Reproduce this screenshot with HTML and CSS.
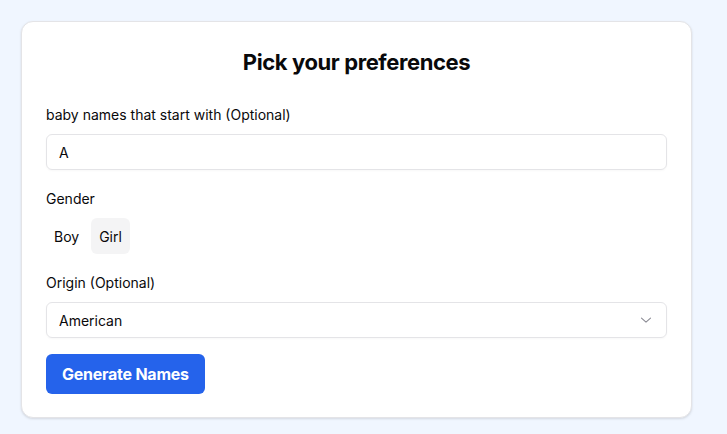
FILE: index.html
```html
<!DOCTYPE html>
<html>
<head>
<meta charset="utf-8">
<link rel="stylesheet" href="styles.css">
</head>
<body>
<div class="page">
  <div class="card">
    <h1 class="title">Pick your preferences</h1>
    <div class="field">
      <label class="label">baby names that start with (Optional)</label>
      <div class="input">A</div>
    </div>
    <div class="field">
      <label class="label">Gender</label>
      <div class="toggles">
        <div class="toggle">Boy</div>
        <div class="toggle active">Girl</div>
      </div>
    </div>
    <div class="field">
      <label class="label">Origin (Optional)</label>
      <div class="input select">
        <span>American</span>
        <svg class="chev" width="16" height="16" viewBox="0 0 16 16" fill="none" stroke="#8a8a93" stroke-width="1.1" stroke-linecap="round" stroke-linejoin="round"><path d="M3.5 6.2l4.5 4L12.5 6.2"/></svg>
      </div>
    </div>
    <div class="actions">
      <button class="btn">Generate Names</button>
    </div>
  </div>
</div>
</body>
</html>
```
FILE: styles.css
```css
* { box-sizing: border-box; }
html, body { margin: 0; padding: 0; }
body {
  background: #f0f6ff;
  font-family: Inter, "Noto Sans", sans-serif;
  color: #09090b;
  width: 727px;
  height: 434px;
  overflow: hidden;
}
.page {
  padding: 21px 35px 0 21px;
}
.card {
  width: 671px;
  background: #fff;
  border: 1px solid #e4e4e7;
  border-radius: 12px;
  box-shadow: 0 1px 3px rgba(0,0,0,0.08), 0 1px 2px rgba(0,0,0,0.05);
  padding: 24px 24px 23px 24px;
}
.title {
  margin: 0 0 27px 0;
  font-size: 22px;
  line-height: 32px;
  font-weight: 700;
  text-align: center;
  letter-spacing: -0.4px;
}
.field {
  margin-bottom: 19px;
}
.label {
  display: block;
  font-size: 14px;
  line-height: 20px;
  font-weight: 400;
  margin-bottom: 9px;
}
.input {
  height: 36px;
  border: 1px solid #e4e4e7;
  border-radius: 6px;
  padding: 0 12px;
  display: flex;
  align-items: center;
  font-size: 14px;
  box-shadow: 0 1px 2px rgba(0,0,0,0.03);
}
.select {
  justify-content: space-between;
  padding-right: 12px;
}
.chev { display: block; }
.toggles {
  display: flex;
  gap: 4px;
}
.toggle {
  height: 36px;
  padding: 0 8px;
  display: flex;
  align-items: center;
  font-size: 14px;
  font-weight: 400;
  border-radius: 6px;
}
.toggle.active { background: #f4f4f5; }
.actions {
  margin-top: -3px;
}
.btn {
  height: 40px;
  padding: 0 16px;
  background: #2563eb;
  color: #fff;
  border: none;
  border-radius: 6px;
  font-family: Inter, "Noto Sans", sans-serif;
  font-size: 16px;
  font-weight: 700;
  letter-spacing: -0.25px;
}
```
